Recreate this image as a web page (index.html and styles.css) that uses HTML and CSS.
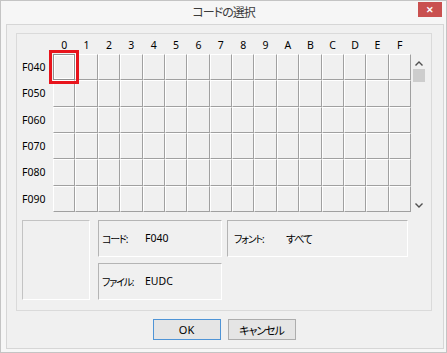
FILE: index.html
```html
<!DOCTYPE html>
<html lang="ja">
<head>
  <meta charset="UTF-8" />
  <title>コードの選択</title>
  <link rel="stylesheet" href="styles.css">
</head>
<body>
  <div class="window">
    <div class="titlebar">
      <span></span>
      <span class="title">コードの選択</span>
      <span class="close">&#x2715;</span>
    </div>

    <div class="client">
      <div class="frame">
        <div class="chart">
          <div class="corner"></div>
          <div class="col-head">0</div><div class="col-head">1</div><div class="col-head">2</div><div class="col-head">3</div>
          <div class="col-head">4</div><div class="col-head">5</div><div class="col-head">6</div><div class="col-head">7</div>
          <div class="col-head">8</div><div class="col-head">9</div><div class="col-head">A</div><div class="col-head">B</div>
          <div class="col-head">C</div><div class="col-head">D</div><div class="col-head">E</div><div class="col-head">F</div>
          <div class="corner"></div>

          <div class="row-head">F040</div>
          <div class="cell selected"></div><div class="cell"></div><div class="cell"></div><div class="cell"></div>
          <div class="cell"></div><div class="cell"></div><div class="cell"></div><div class="cell"></div>
          <div class="cell"></div><div class="cell"></div><div class="cell"></div><div class="cell"></div>
          <div class="cell"></div><div class="cell"></div><div class="cell"></div><div class="cell"></div>

          <div class="scrollbar">
            <div class="arrow">
              <svg width="8" height="5" viewBox="0 0 8 5"><polyline points="0.5,4.5 4,1 7.5,4.5" fill="none" stroke="#505050" stroke-width="1.4"/></svg>
            </div>
            <div class="thumb"></div>
            <div class="track"></div>
            <div class="arrow">
              <svg width="8" height="5" viewBox="0 0 8 5"><polyline points="0.5,0.5 4,4 7.5,0.5" fill="none" stroke="#505050" stroke-width="1.4"/></svg>
            </div>
          </div>

          <div class="row-head">F050</div>
          <div class="cell"></div><div class="cell"></div><div class="cell"></div><div class="cell"></div>
          <div class="cell"></div><div class="cell"></div><div class="cell"></div><div class="cell"></div>
          <div class="cell"></div><div class="cell"></div><div class="cell"></div><div class="cell"></div>
          <div class="cell"></div><div class="cell"></div><div class="cell"></div><div class="cell"></div>

          <div class="row-head">F060</div>
          <div class="cell"></div><div class="cell"></div><div class="cell"></div><div class="cell"></div>
          <div class="cell"></div><div class="cell"></div><div class="cell"></div><div class="cell"></div>
          <div class="cell"></div><div class="cell"></div><div class="cell"></div><div class="cell"></div>
          <div class="cell"></div><div class="cell"></div><div class="cell"></div><div class="cell"></div>

          <div class="row-head">F070</div>
          <div class="cell"></div><div class="cell"></div><div class="cell"></div><div class="cell"></div>
          <div class="cell"></div><div class="cell"></div><div class="cell"></div><div class="cell"></div>
          <div class="cell"></div><div class="cell"></div><div class="cell"></div><div class="cell"></div>
          <div class="cell"></div><div class="cell"></div><div class="cell"></div><div class="cell"></div>

          <div class="row-head">F080</div>
          <div class="cell"></div><div class="cell"></div><div class="cell"></div><div class="cell"></div>
          <div class="cell"></div><div class="cell"></div><div class="cell"></div><div class="cell"></div>
          <div class="cell"></div><div class="cell"></div><div class="cell"></div><div class="cell"></div>
          <div class="cell"></div><div class="cell"></div><div class="cell"></div><div class="cell"></div>

          <div class="row-head">F090</div>
          <div class="cell"></div><div class="cell"></div><div class="cell"></div><div class="cell"></div>
          <div class="cell"></div><div class="cell"></div><div class="cell"></div><div class="cell"></div>
          <div class="cell"></div><div class="cell"></div><div class="cell"></div><div class="cell"></div>
          <div class="cell"></div><div class="cell"></div><div class="cell"></div><div class="cell"></div>
        </div>

        <div class="details">
          <div class="preview"></div>
          <div class="info">
            <div class="info-box">
              <span class="info-label">コード:</span>
              <span class="info-value">F040</span>
            </div>
            <div class="info-box font-box">
              <span class="info-label">フォント:</span>
              <span class="info-value jp">すべて</span>
            </div>
            <div class="info-box">
              <span class="info-label">ファイル:</span>
              <span class="info-value">EUDC</span>
            </div>
          </div>
        </div>
      </div>

      <div class="button-row">
        <button class="btn default">OK</button>
        <button class="btn jp">キャンセル</button>
      </div>
    </div>
  </div>
</body>
</html>
```

FILE: styles.css
```css
:root {
  --face: #f0f0f0;
  --frame: #f6f6f6;
  --shadow: #a0a0a0;
  --light: #ffffff;
  --text: #000000;
  --font: "Noto Sans", "Noto Sans CJK JP", sans-serif;
}

* {
  box-sizing: border-box;
}

body {
  margin: 0;
  font-family: var(--font);
  color: var(--text);
  background: #ffffff;
}

.window {
  width: 447px;
  height: 353px;
  border: 1px solid #c4c4c4;
  background: var(--frame);
  display: flex;
  flex-direction: column;
}

.titlebar {
  height: 23px;
  display: grid;
  grid-template-columns: 1fr auto 1fr;
  align-items: start;
}

.title {
  font-size: 12px;
  line-height: 23px;
  color: #3b3b3b;
  letter-spacing: -1px;
  font-feature-settings: "palt";
}

.close {
  justify-self: end;
  width: 24px;
  height: 15px;
  margin: 1px 4px 0 0;
  background: #c9504f;
  color: #ffffff;
  font-size: 9px;
  font-weight: bold;
  line-height: 15px;
  text-align: center;
}

.client {
  flex: 1;
  margin: 0 2px 3px 5px;
  border: 1px solid #d6d6d6;
  background: var(--face);
  padding: 8px 11px 0 9px;
}

.frame {
  height: 278px;
  border: 1px solid #dadada;
}

/* character grid */
.chart {
  display: grid;
  grid-template-columns: 36px repeat(16, 22.375px) 15px;
  grid-template-rows: 20px repeat(6, 26.33px);
  font-size: 10.5px;
}

.col-head {
  display: flex;
  align-items: flex-end;
  justify-content: center;
  padding-bottom: 4px;
  line-height: 1;
}

.row-head {
  display: flex;
  align-items: center;
  padding-left: 5px;
}

.cell {
  border-top: 1px solid var(--light);
  border-left: 1px solid var(--light);
  border-right: 1px solid var(--shadow);
  border-bottom: 1px solid var(--shadow);
  background: var(--face);
}

.cell.selected {
  border: 1px solid #8f8f8f;
  box-shadow: inset 0 0 0 1px #ffffff;
  outline: 3px solid #e8141c;
  outline-offset: 1px;
  position: relative;
  z-index: 1;
}

.scrollbar {
  grid-column: 18;
  grid-row: 2 / span 6;
  display: flex;
  flex-direction: column;
  align-items: center;
}

.arrow {
  height: 15px;
  width: 100%;
  padding-top: 3px;
  display: flex;
  align-items: center;
  justify-content: center;
}

.thumb {
  width: 12px;
  height: 13px;
  background: #cdcdcd;
}

.track {
  flex: 1;
}

/* bottom detail boxes */
.details {
  display: flex;
  gap: 8px;
  margin: 8px 0 0 5px;
}

.preview {
  width: 68px;
  height: 80px;
  border: 1px solid;
  border-color: #c3c3c3 #ffffff #ffffff #c3c3c3;
}

.info {
  display: grid;
  grid-template-columns: 124px 181px;
  grid-template-rows: 37px 37px;
  column-gap: 5px;
  row-gap: 6px;
}

.info-box {
  display: flex;
  align-items: center;
  padding-left: 3px;
  border: 1px solid;
  border-color: #b4b4b4 #ffffff #ffffff #b4b4b4;
  font-size: 10.5px;
}

.info-label {
  width: 43px;
  font-size: 10px;
  letter-spacing: -1.2px;
  font-feature-settings: "palt";
}

.jp {
  letter-spacing: -1px;
  font-feature-settings: "palt";
}

.font-box {
  padding-left: 6px;
}

.font-box .info-label {
  width: 52px;
}

/* buttons */
.button-row {
  display: flex;
  justify-content: center;
  gap: 7px;
  margin-top: 8px;
}

.btn {
  width: 68px;
  height: 21px;
  padding: 0;
  font-family: var(--font);
  font-size: 11px;
  color: var(--text);
  background: #e5e5e5;
  border: 1px solid #adadad;
}

.btn.default {
  border-color: #4f94d6;
}
```
